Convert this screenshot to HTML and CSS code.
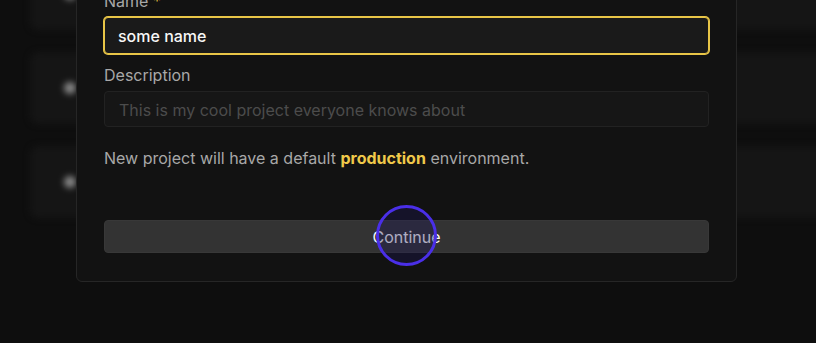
FILE: index.html
```html
<!DOCTYPE html>
<html lang="en">
<head>
<meta charset="utf-8">
<title>New project</title>
<link rel="stylesheet" href="styles.css">
</head>
<body>
<div class="backdrop">
  <div class="list">
    <div class="row"><span class="dot"></span></div>
    <div class="row"><span class="dot"></span></div>
    <div class="row"><span class="dot"></span></div>
  </div>
</div>
<div class="overlay">
  <form class="modal">
    <label class="label">Name <span class="req">*</span></label>
    <div class="input focused">some name</div>
    <label class="label desc-label">Description</label>
    <div class="input placeholder">This is my cool project everyone knows about</div>
    <p class="note">New project will have a default <strong>production</strong> environment.</p>
    <div class="btn-wrap">
      <button type="button" class="btn">Continue</button>
      <span class="cursor"></span>
    </div>
  </form>
</div>
</body>
</html>
```

FILE: styles.css
```css
* { box-sizing: border-box; }
html, body { margin: 0; padding: 0; }
body {
  width: 816px;
  height: 343px;
  overflow: hidden;
  background: #0e0e0e;
  font-family: Inter, "Noto Sans", sans-serif;
  position: relative;
}
.backdrop {
  filter: blur(3px);
  padding-left: 30px;
}
.list {
  display: flex;
  flex-direction: column;
  gap: 22px;
  margin-top: -42px;
  width: 820px;
}
.row {
  height: 72px;
  background: #151515;
  border-radius: 8px;
  position: relative;
}
.dot {
  position: absolute;
  left: 34px;
  top: 30px;
  width: 12px;
  height: 12px;
  border-radius: 50%;
  background: #8a8a8a;
}
.overlay {
  position: absolute;
  inset: 0;
  display: flex;
  align-items: flex-end;
  padding-left: 76px;
  padding-bottom: 61px;
}
.modal {
  width: 661px;
  background: #121212;
  border: 1px solid #262626;
  border-radius: 6px;
  padding: 0 27px 28px;
  display: flex;
  flex-direction: column;
}
.label {
  font-size: 16px;
  line-height: 20px;
  color: #a8a8a8;
  margin-bottom: 6px;
}
.req { color: #e8c547; }
.input {
  height: 37px;
  border-radius: 4px;
  font-size: 16px;
  line-height: 20px;
  padding: 8px 14px;
  background: #161616;
  border: 1px solid #222;
  white-space: nowrap;
}
.focused {
  background: #1a1a1a;
  border-color: #e8c547;
  box-shadow: 0 0 0 1px #e8c547;
  color: #f7f7f7;
  font-weight: 500;
  padding-left: 13px;
}
.placeholder { color: #4c4c4c; height: 36px; }
.desc-label { margin-top: 11px; }
.note {
  margin: 21px 0 0;
  font-size: 16px;
  line-height: 20px;
  color: #a8a8a8;
}
.note strong { color: #f0c94a; font-weight: 700; }
.btn-wrap {
  margin-top: 52px;
  position: relative;
}
.btn {
  display: block;
  width: 100%;
  height: 33px;
  border: 1px solid #383838;
  border-radius: 4px;
  background: #333;
  color: #f5f5f5;
  font-family: inherit;
  font-size: 16px;
  font-weight: 400;
  padding: 0;
}
.cursor {
  position: absolute;
  left: 272px;
  top: -15px;
  width: 61px;
  height: 61px;
  border-radius: 50%;
  border: 3px solid #4a2fe8;
  background: rgba(29, 23, 91, 0.32);
}
```
